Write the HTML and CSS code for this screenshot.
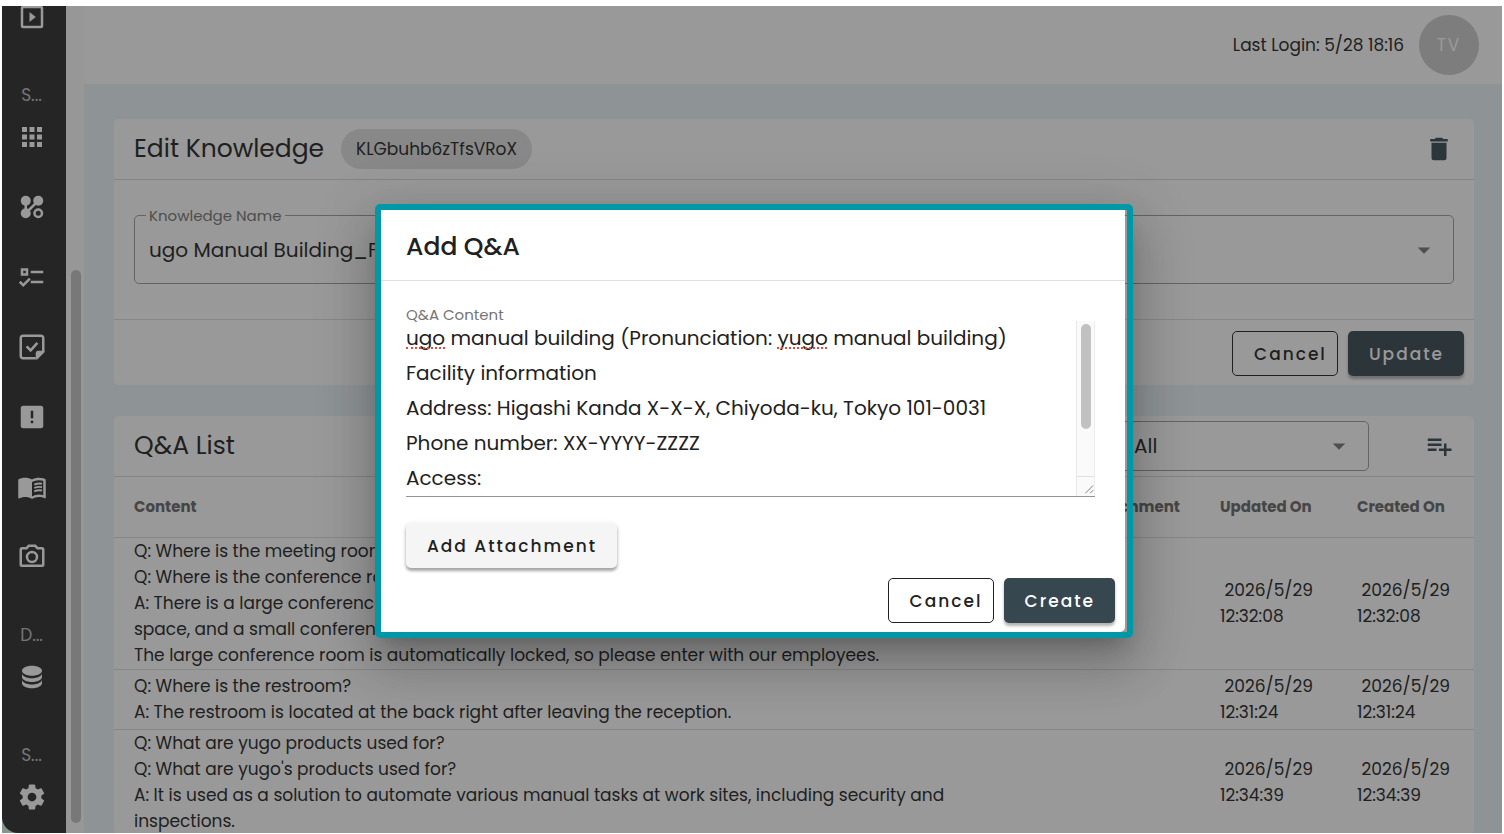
FILE: index.html
```html
<!DOCTYPE html>
<html lang="en">
<head>
<meta charset="utf-8">
<title>Edit Knowledge</title>
<link rel="stylesheet" href="styles.css">
</head>
<body>
<div class="app">
  <nav class="sidebar" aria-label="Main">
    <a class="nav-item nav-item-first" href="#" aria-label="Play"><svg class="icon" viewBox="0 0 24 24"><rect x="4" y="4" width="16" height="16" rx="1" fill="none" stroke="currentColor" stroke-width="2"/><path d="M10 8l5 4-5 4z"/></svg></a>
    <span class="nav-label">S...</span>
    <a class="nav-item" href="#" aria-label="Apps"><svg class="icon" viewBox="0 0 24 24"><path d="M4 4h4v4H4zM10 4h4v4h-4zM16 4h4v4h-4zM4 10h4v4H4zM10 10h4v4h-4zM16 10h4v4h-4zM4 16h4v4H4zM10 16h4v4h-4zM16 16h4v4h-4z"/></svg></a>
    <a class="nav-item" href="#" aria-label="Flows"><svg class="icon" viewBox="0 0 24 24"><circle cx="7" cy="7" r="4"/><circle cx="17" cy="7" r="4"/><circle cx="7" cy="17" r="4"/><circle cx="17" cy="17" r="3" fill="none" stroke="currentColor" stroke-width="2"/><path d="M7 7v10L17 7" fill="none" stroke="currentColor" stroke-width="2"/></svg></a>
    <a class="nav-item" href="#" aria-label="Tasks"><svg class="icon" viewBox="0 0 24 24"><path d="M3 5H9V11H3V5M5 7V9H7V7H5M11 7H21V9H11V7M11 15H21V17H11V15M5 20L1.5 16.5L2.91 15.09L5 17.17L9.59 12.59L11 14L5 20Z"/></svg></a>
    <a class="nav-item" href="#" aria-label="Reports"><svg class="icon" viewBox="0 0 24 24"><path d="M15 21H5a2 2 0 0 1-2-2V5a2 2 0 0 1 2-2h14a2 2 0 0 1 2 2v10.500M7.700 11.500l3.200 3.200 5.400-6" fill="none" stroke="currentColor" stroke-width="2"/><path d="M15 22v-5a2 2 0 0 1 2-2h5v1.200L16.200 22z"/></svg></a>
    <a class="nav-item" href="#" aria-label="Alerts"><svg class="icon" viewBox="0 0 24 24"><path d="M5 3H19A2 2 0 0 1 21 5V19A2 2 0 0 1 19 21H5A2 2 0 0 1 3 19V5A2 2 0 0 1 5 3M13 13V7H11V13H13M13 17V15H11V17H13Z"/></svg></a>
    <a class="nav-item" href="#" aria-label="Knowledge"><svg class="icon" viewBox="0 0 24 24"><path d="M21 5c-1.110-.35-2.330-.5-3.500-.5-1.950 0-4.050.4-5.500 1.500-1.450-1.100-3.550-1.500-5.500-1.500S2.450 4.900 1 6v14.650c0 .25.25.5.5.5.1 0 .15-.05.25-.05C3.100 20.450 5.050 20 6.500 20c1.950 0 4.050.4 5.500 1.500 1.350-.85 3.800-1.500 5.500-1.500 1.650 0 3.350.3 4.750 1.050.1.05.15.05.25.05.25 0 .5-.25.5-.5V6c-.6-.45-1.250-.75-2-1zm0 13.500c-1.100-.35-2.300-.5-3.500-.5-1.700 0-4.150.65-5.500 1.500V8c1.350-.85 3.800-1.500 5.500-1.500 1.200 0 2.400.15 3.500.5v11.500z"/><path d="M13.800 10.100c1.800-.8 4-1.100 6.200-.7M13.800 12.800c1.800-.8 4-1.100 6.200-.7M13.800 15.500c1.800-.8 4-1.100 6.200-.7" fill="none" stroke="currentColor" stroke-width="1.500"/></svg></a>
    <a class="nav-item" href="#" aria-label="Camera"><svg class="icon" viewBox="0 0 24 24"><path d="M20 4H16.830L15 2H9L7.170 4H4A2 2 0 0 0 2 6V18A2 2 0 0 0 4 20H20A2 2 0 0 0 22 18V6A2 2 0 0 0 20 4M20 18H4V6H8.050L9.880 4H14.120L15.950 6H20V18M12 7A5 5 0 0 0 7 12A5 5 0 0 0 12 17A5 5 0 0 0 17 12A5 5 0 0 0 12 7M12 15A3 3 0 0 1 9 12A3 3 0 0 1 12 9A3 3 0 0 1 15 12A3 3 0 0 1 12 15Z"/></svg></a>
    <span class="nav-label">D...</span>
    <a class="nav-item" href="#" aria-label="Data"><svg class="icon" viewBox="0 0 24 24"><path d="M12 3C7.580 3 4 4.790 4 7C4 9.210 7.580 11 12 11C16.420 11 20 9.210 20 7C20 4.790 16.420 3 12 3M4 9V12C4 14.210 7.580 16 12 16C16.420 16 20 14.210 20 12V9C20 11.210 16.420 13 12 13C7.580 13 4 11.210 4 9M4 14V17C4 19.210 7.580 21 12 21C16.420 21 20 19.210 20 17V14C20 16.210 16.420 18 12 18C7.580 18 4 16.210 4 14Z"/></svg></a>
    <span class="nav-label">S...</span>
    <a class="nav-item" href="#" aria-label="Settings"><svg class="icon" viewBox="0 0 24 24"><path d="M12,15.5A3.5,3.5 0 0,1 8.5,12A3.5,3.5 0 0,1 12,8.5A3.5,3.5 0 0,1 15.5,12A3.5,3.5 0 0,1 12,15.5M19.43,12.97C19.47,12.65 19.5,12.33 19.5,12C19.5,11.67 19.47,11.34 19.43,11L21.54,9.37C21.73,9.22 21.78,8.95 21.66,8.73L19.66,5.27C19.54,5.05 19.27,4.96 19.05,5.05L16.56,6.05C16.04,5.66 15.5,5.32 14.87,5.07L14.5,2.42C14.46,2.18 14.25,2 14,2H10C9.75,2 9.54,2.18 9.5,2.42L9.13,5.07C8.5,5.32 7.96,5.66 7.44,6.05L4.95,5.05C4.73,4.96 4.46,5.05 4.34,5.27L2.34,8.73C2.21,8.95 2.27,9.22 2.46,9.37L4.57,11C4.53,11.34 4.5,11.67 4.5,12C4.5,12.33 4.53,12.65 4.57,12.97L2.46,14.63C2.27,14.78 2.21,15.05 2.34,15.27L4.34,18.73C4.46,18.95 4.73,19.03 4.95,18.95L7.44,17.94C7.96,18.34 8.5,18.68 9.13,18.93L9.5,21.58C9.54,21.82 9.75,22 10,22H14C14.25,22 14.46,21.82 14.5,21.58L14.87,18.93C15.5,18.67 16.04,18.34 16.56,17.94L19.05,18.95C19.27,19.03 19.54,18.95 19.66,18.73L21.66,15.27C21.78,15.05 21.73,14.78 21.54,14.63L19.43,12.97Z"/></svg></a>
  </nav>
  <div class="nav-scroll"><div class="nav-thumb"></div></div>
  <div class="page">
    <header class="topbar">
      <span>Last Login: 5/28 18:16</span>
      <button class="avatar" type="button">TV</button>
    </header>
    <main class="content">
      <section class="card">
        <div class="card-head">
          <h1 class="card-title">Edit Knowledge</h1>
          <span class="chip">KLGbuhb6zTfsVRoX</span>
          <button class="icon-button" type="button" aria-label="Delete"><svg class="icon" viewBox="0 0 24 24"><path d="M19 4H15.500L14.500 3H9.500L8.500 4H5V6H19M6 19A2 2 0 0 0 8 21H16A2 2 0 0 0 18 19V7H6V19Z"/></svg></button>
        </div>
        <div class="card-body">
          <div class="select-box">
            <label class="float-label" for="kname">Knowledge Name</label>
            <select class="select" id="kname"><option>ugo Manual Building_FAQ</option></select>
            <svg class="icon caret" viewBox="0 0 24 24"><path d="M7 10l5 5 5-5z"/></svg>
          </div>
        </div>
        <div class="card-actions">
          <button class="btn btn-outline" type="button">Cancel</button>
          <button class="btn btn-primary" type="button">Update</button>
        </div>
      </section>
      <section class="card">
        <div class="card-head">
          <h2 class="card-title">Q&amp;A List</h2>
          <div class="select-box filter">
            <select class="select" aria-label="Filter"><option>All</option></select>
            <svg class="icon caret" viewBox="0 0 24 24"><path d="M7 10l5 5 5-5z"/></svg>
          </div>
          <button class="icon-button" type="button" aria-label="Add Q&amp;A"><svg class="icon" viewBox="0 0 24 24"><path d="M3 16H10V14H3M18 14V10H16V14H12V16H16V20H18V16H22V14M14 6H3V8H14M14 10H3V12H14V10Z"/></svg></button>
        </div>
        <table class="qa">
          <colgroup><col><col class="col-attach"><col class="col-date"><col class="col-date"></colgroup>
          <thead><tr><th>Content</th><th>Attachment</th><th>Updated On</th><th>Created On</th></tr></thead>
          <tbody>
            <tr class="row-tall"><td>Q: Where is the meeting room?<br>Q: Where is the conference room?<br>A: There is a large conference room in the back of the office<br>space, and a small conference room.<br>The large conference room is automatically locked, so please enter with our employees.</td><td></td><td>&nbsp;2026/5/29<br>12:32:08</td><td>&nbsp;2026/5/29<br>12:32:08</td></tr>
            <tr><td>Q: Where is the restroom?<br>A: The restroom is located at the back right after leaving the reception.</td><td></td><td>&nbsp;2026/5/29<br>12:31:24</td><td>&nbsp;2026/5/29<br>12:31:24</td></tr>
            <tr><td>Q: What are yugo products used for?<br>Q: What are yugo's products used for?<br>A: It is used as a solution to automate various manual tasks at work sites, including security and<br>inspections.</td><td></td><td>&nbsp;2026/5/29<br>12:34:39</td><td>&nbsp;2026/5/29<br>12:34:39</td></tr>
          </tbody>
        </table>
      </section>
    </main>
  </div>
  <div class="overlay">
    <div class="frame">
      <div class="dialog" role="dialog" aria-labelledby="dialog-title">
        <h2 class="dialog-title" id="dialog-title">Add Q&amp;A</h2>
        <div class="dialog-body">
          <label class="field-label" for="qa-content">Q&amp;A Content</label>
          <div class="field">
            <textarea class="field-text" id="qa-content" spellcheck="false">ugo manual building (Pronunciation: yugo manual building)
Facility information
Address: Higashi Kanda X-X-X, Chiyoda-ku, Tokyo 101-0031
Phone number: XX-YYYY-ZZZZ
Access:</textarea>
            <span class="squiggle squiggle-ugo"></span>
            <span class="squiggle squiggle-yugo"></span>
            <div class="field-scroll">
              <div class="field-thumb"></div>
              <svg class="grip" viewBox="0 0 18 18"><path d="M9 16l8-8M14 16l3-3" fill="none" stroke="currentColor"/></svg>
            </div>
          </div>
          <button class="btn btn-plain" type="button">Add Attachment</button>
        </div>
        <div class="dialog-actions">
          <button class="btn btn-outline" type="button">Cancel</button>
          <button class="btn btn-primary" type="button">Create</button>
        </div>
      </div>
    </div>
  </div>
</div>
</body>
</html>
```
FILE: styles.css
```css
* { box-sizing: border-box; }
body {
  margin: 0;
  height: 100vh;
  padding: 6px 2px 1px;
  background: #fff;
  color: #212121;
  font: 17px/26px Poppins, Inter, sans-serif;
}
h1, h2 { margin: 0; font-weight: 400; }
button, select, textarea { font: inherit; color: inherit; }
.icon { width: 30px; height: 30px; fill: currentColor; display: block; flex: none; }

.app { position: relative; display: flex; height: 100%; overflow: hidden; background: #dcfae8; }
.sidebar {
  flex: none;
  width: 64px;
  overflow: hidden;
  background: #2a2a2a;
  color: #fff;
  border-bottom-left-radius: 16px;
}
.nav-item { display: flex; align-items: center; justify-content: center; height: 70px; padding-right: 5px; color: #fff; }
.nav-item-first { margin-top: -24px; }
.nav-label { display: block; height: 50px; padding: 35px 5px 0 0; text-align: center; line-height: 16px; color: #bdbdbd; }
.nav-scroll { flex: none; width: 18px; padding: 264px 3px 10px 5px; background: #fcfcfc; }
.nav-thumb { height: 100%; border-radius: 5px; background: #c2c2c2; }

.page { flex: 1; min-width: 0; background: #ebf4fa; }
.topbar { display: flex; align-items: center; justify-content: flex-end; gap: 15px; height: 78px; padding-right: 23px; background: #fff; }
.avatar { width: 60px; height: 60px; border: 0; border-radius: 50%; background: #cbcbcb; color: #fff; letter-spacing: 2px; }
.content { display: flex; flex-direction: column; gap: 31px; padding: 35px 28px 0 30px; }

.card { border-radius: 5px; background: #fff; }
.card-head { display: flex; align-items: center; height: 61px; padding: 0 20px; border-bottom: 1px solid #d8d8d8; }
.card-title { font-size: 25px; line-height: 36px; }
.chip { margin-left: 17px; padding: 7px 15px; border-radius: 20px; background: #e0e0e0; }
.icon-button { display: flex; margin-left: auto; padding: 0; border: 0; background: none; color: #37474f; }
.card-body { padding: 35px 20px; border-bottom: 1px solid #dedede; }
.select-box { position: relative; height: 69px; }
.select { width: 100%; height: 100%; padding: 0 14px; border: 1px solid #9e9e9e; border-radius: 5px; background: none; appearance: none; font-size: 20px; }
.float-label { position: absolute; top: -12px; left: 12px; padding: 0 3px; background: #fff; color: #757575; font-size: 15px; }
.caret { position: absolute; top: 50%; right: 15px; margin-top: -15px; color: #757575; }
.filter { width: 250px; height: 50px; margin-left: auto; }
.filter + .icon-button { margin-left: 55px; }
.card-actions { display: flex; justify-content: flex-end; gap: 10px; padding: 11px 10px 9px; }

.btn { height: 45px; padding: 0 20px; border: 1px solid transparent; border-radius: 5px; font-weight: 500; font-size: 17px; letter-spacing: 2px; }
.btn-outline { padding: 0 10px 0 21px; border-color: #212121; background: none; }
.btn-primary { padding: 0 19px 0 20px; background: #37474f; color: #fff; box-shadow: 0 3px 3px rgba(0, 0, 0, .3); }
.btn-plain { padding: 0 19px 0 20px; background: #f5f5f5; box-shadow: 0 3px 3px rgba(0, 0, 0, .3), 0 1px 5px rgba(0, 0, 0, .12); }

.qa { width: 100%; border-collapse: collapse; table-layout: fixed; }
.col-attach { width: 134px; }
.col-date { width: 137px; }
.qa th { height: 60px; padding: 0 20px; border-bottom: 1px solid #dedede; text-align: left; font-size: 15px; font-weight: 700; color: #666; }
.qa td { height: 60px; padding: 0 20px; border-bottom: 1px solid #dedede; white-space: nowrap; }
.qa td:nth-child(n + 3) { padding-right: 0; }
.row-tall td { height: 132px; }

.overlay {
  position: absolute;
  inset: 0;
  display: flex;
  align-items: center;
  justify-content: center;
  padding: 3px 0 0 4px;
  background: rgba(33, 33, 33, .46);
}
.frame {
  width: 50%;
  min-width: 758px;
  padding-right: 2px;
  border: 6px solid #0097a7;
  border-radius: 5px;
  box-shadow: 0 14px 19px -9px rgba(0, 0, 0, .2), 0 30px 48px 4px rgba(0, 0, 0, .14), 0 11px 58px 10px rgba(0, 0, 0, .12);
}
.dialog { border-radius: 0 0 5px; background: #fff; }
.dialog-title { padding: 19px 25px 15px; border-bottom: 1px solid #e0e0e0; font-size: 25px; font-weight: 500; line-height: 36px; }
.dialog-body { display: flex; flex-direction: column; align-items: flex-start; padding: 24px 30px 0 25px; }
.field-label { height: 16px; color: #757575; font-size: 15px; line-height: 20px; }
.field { position: relative; display: flex; align-self: stretch; height: 176px; margin-bottom: 26px; border-bottom: 1px solid #949494; }
.field-text { flex: 1; min-width: 0; padding: 0; border: 0; outline: 0; background: none; resize: none; overflow: hidden; font-size: 20px; line-height: 35px; }
.squiggle { position: absolute; top: 26px; height: 2px; border-bottom: 2px dotted #f44336; }
.squiggle-ugo { left: 0; width: 39px; }
.squiggle-yugo { left: 371px; width: 50px; }
.field-scroll { display: flex; flex-direction: column; justify-content: space-between; width: 19px; padding-top: 3px; border-left: 1px solid #e8e8e8; border-right: 1px solid #ededed; background: #fafafa; }
.field-thumb { height: 105px; margin: 0 3px 0 4px; border-radius: 5px; background: #c1c1c1; }
.grip { display: block; height: 20px; border-top: 1px solid #e0e0e0; color: #757575; }
.dialog-actions { display: flex; justify-content: flex-end; gap: 10px; padding: 10px 10px 9px; }
```
